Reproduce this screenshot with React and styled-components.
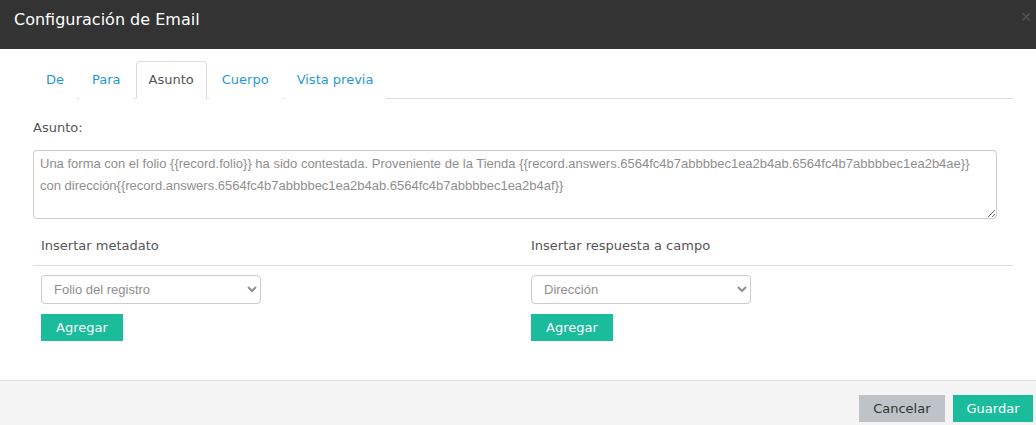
import React from 'react';
import styled, { createGlobalStyle } from 'styled-components';

const GlobalStyle = createGlobalStyle`
  body {
    margin: 0;
    background: #fff;
    font-family: "DejaVu Sans", "Open Sans", sans-serif;
  }
`;

const Modal = styled.div`
  width: 1036px;
  height: 425px;
  display: flex;
  flex-direction: column;
  background: #fff;
  overflow: hidden;
`;

const Header = styled.div`
  height: 49px;
  box-sizing: border-box;
  background: #333333;
  padding: 10px 14px 0 14px;
  display: flex;
  justify-content: space-between;
  align-items: flex-start;
`;

const Title = styled.h4`
  margin: 0;
  font-size: 16px;
  font-weight: normal;
  line-height: 20px;
  color: #fff;
`;

const Close = styled.span`
  color: #555;
  font-size: 14px;
  line-height: 14px;
  margin-right: -10px;
`;

const Body = styled.div`
  flex: 1;
  padding: 12px 23px 0 33px;
`;

const Tabs = styled.ul`
  list-style: none;
  margin: 0;
  padding: 0;
  display: flex;
  gap: 2px;
  height: 38px;
  box-sizing: border-box;
  border-bottom: 1px solid #dddddd;
`;

const Tab = styled.li`
  height: 38px;
  box-sizing: border-box;
  padding: 0 12px 1px 12px;
  display: flex;
  align-items: center;
  font-size: 13px;
  color: ${({ active }) => (active ? '#555' : '#1f9ad6')};
  border: 1px solid ${({ active }) => (active ? '#dddddd' : 'transparent')};
  border-bottom-color: ${({ active }) => (active ? '#fff' : 'transparent')};
  border-radius: 4px 4px 0 0;
  background: #fff;
`;

const Label = styled.div`
  margin-top: 19px;
  font-size: 13px;
  line-height: 20px;
  color: #555;
`;

const TextArea = styled.textarea`
  display: block;
  margin-top: 12px;
  width: 964px;
  height: 69px;
  box-sizing: border-box;
  padding: 2px 6px;
  border: 1px solid #cccccc;
  border-radius: 4px;
  font-family: "Liberation Sans", Arial, sans-serif;
  font-size: 13px;
  line-height: 22px;
  color: #8f8f8f;
  resize: vertical;
  outline: none;
`;

const Columns = styled.div`
  display: grid;
  grid-template-columns: 490px 490px;
  margin-top: 11px;
`;

const Column = styled.div`
  display: flex;
  flex-direction: column;
`;

const ColumnHead = styled.div`
  height: 36px;
  box-sizing: border-box;
  padding: 0 0 4px 8px;
  display: flex;
  align-items: center;
  font-size: 13px;
  color: #555;
  border-bottom: 1px solid #dddddd;
`;

const ColumnBody = styled.div`
  padding: 9px 8px 0 8px;
  display: flex;
  flex-direction: column;
  align-items: flex-start;
  gap: 10px;
`;

const Select = styled.select`
  width: ${({ w }) => w}px;
  height: 29px;
  padding: 0 8px;
  border: 1px solid #cccccc;
  border-radius: 4px;
  background: #fff;
  font-family: "Liberation Sans", Arial, sans-serif;
  font-size: 13px;
  color: #8f8f8f;
  outline: none;
`;

const Button = styled.button`
  height: 27px;
  padding: 0 ${({ px }) => px}px;
  border: none;
  border-radius: 0;
  font-family: "DejaVu Sans", sans-serif;
  font-size: 13px;
  cursor: pointer;
  color: ${({ variant }) => (variant === 'muted' ? '#333' : '#fff')};
  background: ${({ variant }) => (variant === 'muted' ? '#bdc3c7' : '#1abc9c')};
`;

const Footer = styled.div`
  height: 45px;
  box-sizing: border-box;
  border-top: 1px solid #dddddd;
  background: #f4f4f4;
  display: flex;
  justify-content: flex-end;
  align-items: flex-start;
  gap: 8px;
  padding: 14px 3px 0 0;
`;

const subject =
  'Una forma con el folio {{record.folio}} ha sido contestada. Proveniente de la Tienda {{record.answers.6564fc4b7abbbbec1ea2b4ab.6564fc4b7abbbbec1ea2b4ae}} con dirección{{record.answers.6564fc4b7abbbbec1ea2b4ab.6564fc4b7abbbbec1ea2b4af}}';

const tabs = ['De', 'Para', 'Asunto', 'Cuerpo', 'Vista previa'];

export default function App() {
  return (
    <>
      <GlobalStyle />
      <Modal>
        <Header>
          <Title>Configuración de Email</Title>
          <Close>✕</Close>
        </Header>
        <Body>
          <Tabs>
            {tabs.map((t) => (
              <Tab key={t} active={t === 'Asunto' ? 1 : 0}>
                {t}
              </Tab>
            ))}
          </Tabs>
          <Label>Asunto:</Label>
          <TextArea defaultValue={subject} />
          <Columns>
            <Column>
              <ColumnHead>Insertar metadato</ColumnHead>
              <ColumnBody>
                <Select w={220} defaultValue="folio">
                  <option value="folio">Folio del registro</option>
                </Select>
                <Button px={15}>Agregar</Button>
              </ColumnBody>
            </Column>
            <Column>
              <ColumnHead>Insertar respuesta a campo</ColumnHead>
              <ColumnBody>
                <Select w={220} defaultValue="dir">
                  <option value="dir">Dirección</option>
                </Select>
                <Button px={15}>Agregar</Button>
              </ColumnBody>
            </Column>
          </Columns>
        </Body>
        <Footer>
          <Button variant="muted" px={14.5}>Cancelar</Button>
          <Button px={13.5}>Guardar</Button>
        </Footer>
      </Modal>
    </>
  );
}
